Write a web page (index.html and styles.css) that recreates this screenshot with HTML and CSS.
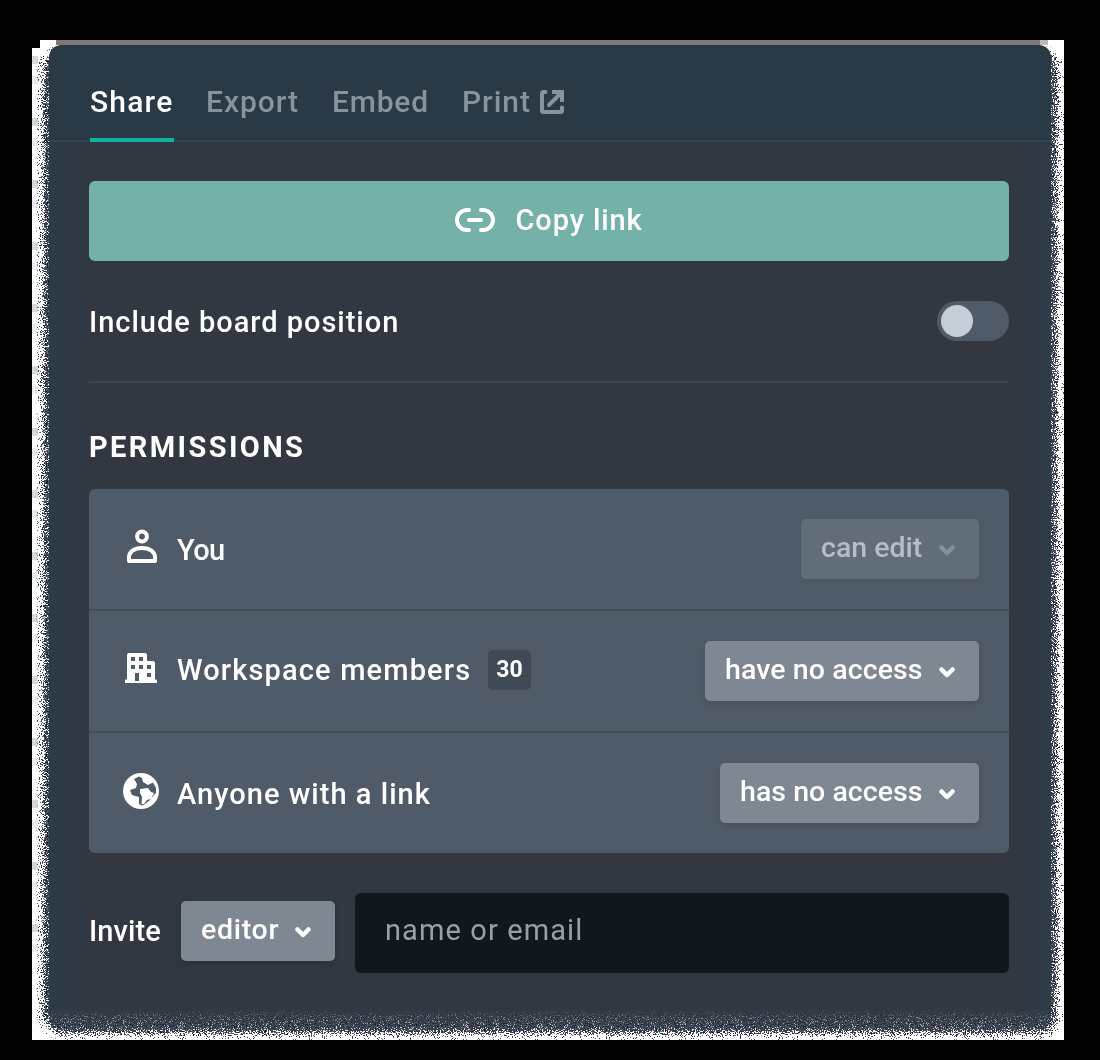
FILE: index.html
```html
<!DOCTYPE html>
<html lang="en">
<head>
<meta charset="utf-8">
<title>Share board</title>
<link rel="stylesheet" href="styles.css">
</head>
<body>
<main class="stage">
  <svg class="grain" width="1032" height="1000" viewBox="0 0 1032 1000" aria-hidden="true">
    <defs>
      <filter id="dither" x="0" y="0" width="1032" height="1000" filterUnits="userSpaceOnUse" color-interpolation-filters="sRGB">
        <feGaussianBlur in="SourceAlpha" stdDeviation="3.5" result="soft"/>
        <feTurbulence type="fractalNoise" baseFrequency="0.93" numOctaves="2" seed="4"/>
        <feColorMatrix values="0 0 0 0 0  0 0 0 0 0  0 0 0 0 0  3 0 0 0 -1" result="noise"/>
        <feComposite in="soft" in2="noise" operator="arithmetic" k2="1" k3="1" k4="-1"/>
        <feComponentTransfer result="mask"><feFuncA type="linear" slope="30"/></feComponentTransfer>
        <feTurbulence type="fractalNoise" baseFrequency="0.9" numOctaves="2" seed="11"/>
        <feColorMatrix values="1.2 0 0 0 -.36  .6 .6 0 0 -.33  .6 0 .6 0 -.27  0 0 0 0 1"/>
        <feComposite in2="mask" operator="in"/>
      </filter>
    </defs>
    <rect x="12" y="12" width="1013" height="981" rx="18" filter="url(#dither)"/>
  </svg>
  <section class="panel">
    <nav class="tabs">
      <a class="tab tab-active"><span class="t-share">Share</span></a>
      <a class="tab"><span class="t-export">Export</span></a>
      <a class="tab"><span class="t-embed">Embed</span></a>
      <a class="tab"><span class="t-print">Print</span>
        <svg class="external" width="26" height="26" viewBox="0 0 26 26" fill="none" stroke="currentColor" stroke-width="4" stroke-linecap="round" stroke-linejoin="round"><path d="M6.5 3H4.5Q3 3 3 4.500V21.500Q3 23 4.500 23H21.500Q23 23 23 21.500V18.500M10 16L20 6"/><path d="M13 3H23V13" stroke-linecap="butt" stroke-linejoin="miter"/></svg>
      </a>
    </nav>
    <div class="content">
      <button class="copy">
        <svg width="40" height="24" viewBox="0 0 40 24" fill="none" stroke="#fff" stroke-width="4" stroke-linecap="round"><path d="M14 2H12A10 10 0 0 0 12 22H14M26 2H28A10 10 0 0 1 28 22H26M14 12H26"/></svg>
        <span class="t-copy">Copy link</span>
      </button>
      <div class="option">
        <span class="t-include">Include board position</span>
        <span class="toggle"><i class="knob"></i></span>
      </div>
      <h2 class="heading"><span class="t-heading">PERMISSIONS</span></h2>
      <div class="card">
        <div class="row">
          <svg class="icon icon-raised" width="36" height="36" viewBox="0 0 36 36" fill="none" stroke="#fff" stroke-width="4"><circle cx="19" cy="7.500" r="4.900"/><path d="M6 32V28.500C6 23 11 19 19 19S32 23 32 28.500V32Z" stroke-linejoin="round"/></svg>
          <span class="label label-low t-you">You</span>
          <button class="select w-edit" disabled><span class="t-edit">can edit</span><svg class="chev" width="16" height="11" viewBox="0 0 16 11"><path d="M2.500 2.500L8 8L13.500 2.500"/></svg></button>
        </div>
        <div class="row">
          <svg class="icon icon-building" width="36" height="36" viewBox="0 0 36 36"><path fill="#fff" fill-rule="evenodd" d="M4 27.500V3Q4 1 6 1H22Q24 1 24 3V9H30Q32 9 32 11V27.500H33Q34 27.500 34 28.500V31H2V28.500Q2 27.500 3 27.500ZM8 5V9H12V5ZM16 5V9H20V5ZM8 13V17H12V13ZM16 13V17H20V13ZM24 13V17H28V13ZM24 21V25H28V21ZM12 21V29H16V21Z"/></svg>
          <span class="label label-members t-members">Workspace members</span>
          <span class="badge">30</span>
          <button class="select w-have"><span class="t-have">have no access</span><svg class="chev" width="16" height="11" viewBox="0 0 16 11"><path d="M2.500 2.500L8 8L13.500 2.500"/></svg></button>
        </div>
        <div class="row">
          <svg class="icon icon-raised" width="36" height="36" viewBox="0 0 36 36"><circle cx="18" cy="18" r="18" fill="#fff"/><path fill="#4f5b68" d="M11 6L16 3.500L19 5L20 9L25 12L30 9.500L33 15V20L31 22L27 27L22 31L19 32.500L16 31V24L9 22L7 17L13 15L14 11Z"/><path fill="#fff" d="M17 16L25 15L28 19L31 20L28 26L24 27L21 31L18.500 31L19 24L17 20Z"/></svg>
          <span class="label label-low t-anyone">Anyone with a link</span>
          <button class="select w-has"><span class="t-has">has no access</span><svg class="chev" width="16" height="11" viewBox="0 0 16 11"><path d="M2.500 2.500L8 8L13.500 2.500"/></svg></button>
        </div>
      </div>
      <div class="invite">
        <span class="invite-label t-invite">Invite</span>
        <button class="select w-editor"><span class="t-editor">editor</span><svg class="chev" width="16" height="11" viewBox="0 0 16 11"><path d="M2.500 2.500L8 8L13.500 2.500"/></svg></button>
        <div class="field"><span class="t-field">name or email</span></div>
      </div>
    </div>
  </section>
</main>
</body>
</html>
```
FILE: styles.css
```css
* { box-sizing: border-box; }
body { margin: 0; height: 1060px; background: #000; color: #fff; font: 500 29px/36px Roboto, sans-serif; overflow: hidden; }
button { margin: 0; padding: 0; border: 0; font: inherit; color: inherit; }
svg { display: block; flex: none; }
.stage {
  position: relative; width: 1032px; height: 1000px; margin: 40px 0 0 32px; padding: 5px 13px 9px 17px;
  background:
    linear-gradient(90deg, #fff 24px, #807777 24px, #807777 1008px, #bbb 1008px, #bbb 1016px, #fff 1016px) 0 0 / 100% 5px no-repeat,
    repeating-linear-gradient(#fff 0 16px, #d8d8d8 16px 24px, #fff 24px 36px, #ececec 36px 44px, #fff 44px 62px) 0 0 / 6px 940px no-repeat,
    #fff;
  clip-path: polygon(8px 0, 100% 0, 100% 100%, 0 100%, 0 8px, 8px 8px);
}
.grain { position: absolute; left: 0; top: 0; clip-path: inset(5px 0 0 0); }
.panel {
  position: relative; height: 986px; border-radius: 12px 12px 20px 20px;
  background: linear-gradient(90deg, #2d3b46, #2d3a45 18px, #313842 42px, #313842 964px, #2d3a45 990px, #2f3d48);
  -webkit-mask-image: linear-gradient(#000 964px, transparent 988px);
  mask-image: linear-gradient(#000 964px, transparent 988px);
}
.tabs { display: flex; height: 97px; padding: 0 41px; border-bottom: 2px solid #33434f; border-radius: 12px 12px 0 0; background: #293945; }
.tab { display: flex; height: 97px; margin-right: 33px; color: #8794a0; font-size: 30px; line-height: 114px; }
.tab-active { width: 84px; margin-right: 32px; color: #fff; border-bottom: 4px solid #0bb3a0; }
.external { margin: 44px 0 0 8px; }
.content { padding: 39px 42px 0 40px; }
.copy { display: flex; align-items: center; justify-content: center; gap: 20px; width: 100%; height: 80px; border-radius: 6px; background: #74b1a9; padding-bottom: 2px; }
.option { display: flex; align-items: center; justify-content: space-between; height: 122px; border-bottom: 2px solid #3a4550; }
.t-include { padding-top: 2px; }
.toggle { display: flex; width: 72px; height: 40px; padding: 4px; border-radius: 20px; background: #4f5b68; }
.knob { width: 32px; height: 32px; border-radius: 50%; background: #c5ced7; }
.heading { margin: 0; height: 106px; padding-top: 46px; font-size: 29px; font-weight: 700; line-height: 36px; }
.card { border-radius: 6px; background: #4f5b68; }
.row { display: flex; align-items: center; height: 120px; padding: 0 30px 0 34px; }
.row + .row { height: 122px; border-top: 2px solid #424e5a; }
.icon { margin-right: 18px; }
.icon-raised { margin-bottom: 4px; }
.icon-building { margin-bottom: 2px; }
.label-low { padding-top: 2px; }
.label-members { width: 311px; padding-bottom: 2px; }
.badge { width: 43px; height: 40px; margin-bottom: 2px; border-radius: 5px; background: #404a56; font-size: 23px; font-weight: 700; line-height: 40px; text-align: center; }
.select { display: flex; align-items: center; justify-content: space-between; height: 60px; margin-left: auto; padding: 0 24px 2px 20px; border-radius: 5px; background: #7e8893; box-shadow: 0 3px 6px #0002; font-size: 28.5px; }
.select:disabled { background: #616d78; color: #b4bec6; box-shadow: 0 2px 5px #0001; }
.chev { fill: none; stroke: #fff; stroke-width: 4.500; stroke-linecap: round; stroke-linejoin: round; margin-top: 4px; }
.select:disabled .chev { stroke: #84919c; }
.w-edit { width: 178px; }
.w-have { width: 274px; }
.w-has { width: 259px; }
.w-editor { width: 154px; margin: 0 20px 4px 0; }
.invite { display: flex; align-items: center; height: 80px; margin-top: 40px; }
.invite-label { width: 92px; padding-bottom: 4px; }
.field { flex: 1; height: 80px; padding: 19px 30px; border-radius: 6px; background: #12171e; color: #98a1aa; font-weight: 400; }
.t-share { letter-spacing: 1.2px; }
.t-export { letter-spacing: .95px; }
.t-embed { letter-spacing: .8px; }
.t-print { letter-spacing: 1px; }
.t-copy { letter-spacing: .9px; }
.t-include { letter-spacing: .98px; }
.t-heading { letter-spacing: 2.4px; }
.t-you { letter-spacing: -.6px; }
.t-edit { letter-spacing: 0; }
.t-members { letter-spacing: 1.15px; }
.t-have { letter-spacing: .1px; }
.t-anyone { letter-spacing: 1.04px; }
.t-has { letter-spacing: .05px; }
.t-invite { letter-spacing: .1px; }
.t-editor { letter-spacing: .7px; }
.t-field { letter-spacing: 1.1px; }
```
